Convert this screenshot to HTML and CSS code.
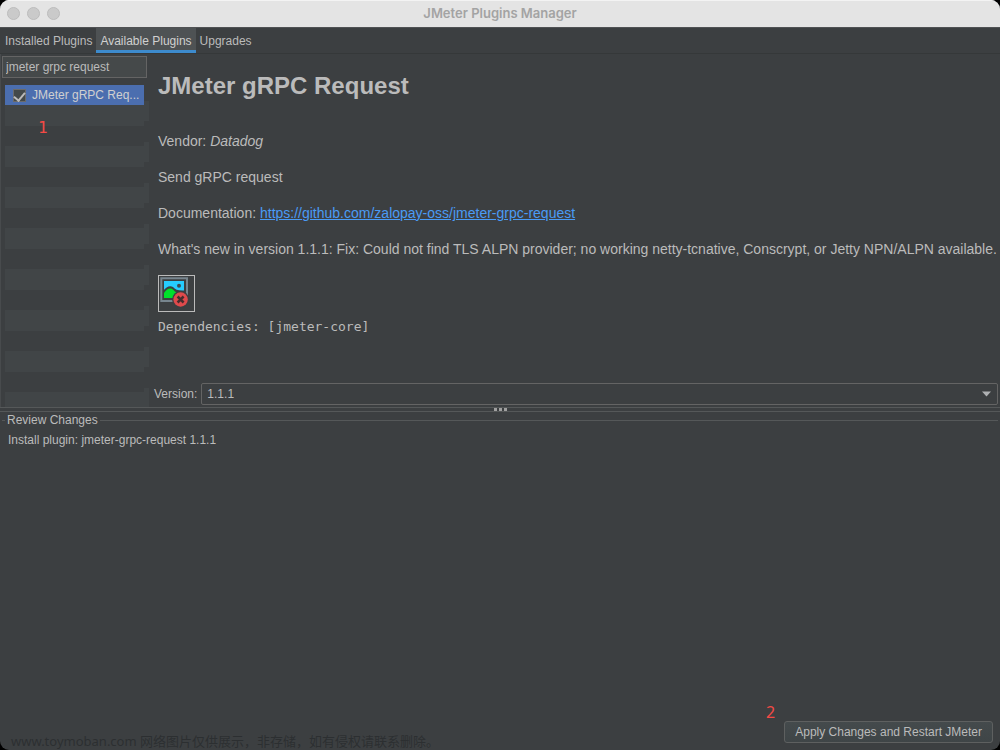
FILE: index.html
```html
<!DOCTYPE html>
<html lang="en">
<head>
<meta charset="utf-8">
<title>JMeter Plugins Manager</title>
<link rel="stylesheet" href="styles.css">
</head>
<body>
<div class="window">
  <header class="titlebar">
    <div class="lights"><button class="light" aria-label="Close"></button><button class="light" aria-label="Minimize"></button><button class="light" aria-label="Zoom"></button></div>
    <span class="window-title">JMeter Plugins Manager</span>
  </header>
  <nav class="tabs" role="tablist">
    <button class="tab" role="tab">Installed Plugins</button>
    <button class="tab active" role="tab" aria-selected="true">Available Plugins</button>
    <button class="tab" role="tab">Upgrades</button>
  </nav>
  <main class="content">
    <aside class="sidebar">
      <input class="search" type="text" value="jmeter grpc request" aria-label="Search plugins">
      <div class="list">
        <label class="item"><input class="check" type="checkbox" checked><span>JMeter gRPC Req...</span></label>
        <span class="step first">1</span>
      </div>
    </aside>
    <section class="detail">
      <article class="description">
        <h1>JMeter gRPC Request</h1>
        <p>Vendor: <i>Datadog</i></p>
        <p>Send gRPC request</p>
        <p>Documentation: <a href="https://github.com/zalopay-oss/jmeter-grpc-request">https://github.com/zalopay-oss/jmeter-grpc-request</a></p>
        <p>What's new in version 1.1.1: Fix: Could not find TLS ALPN provider; no working netty-tcnative, Conscrypt, or Jetty NPN/ALPN available.</p>
        <div class="missing">
          <svg width="31" height="31" viewBox="0 0 31 31" role="img" aria-label="Missing image">
            <path d="M1.300 1.300h25.700v22.700h-25.700z" fill="#3c3f41" stroke="#77858e" stroke-width="2"/>
            <path d="M4 4h20v17H4z" fill="#26ccff"/>
            <path d="M3 14Q8 7.500 13 10Q16 14 24 13.500V22H3z" fill="#3c3f41"/>
            <path d="M4 16Q9 9 13.500 13Q16 16 17 15L14 21H4z" fill="#00e02b"/>
            <circle cx="19" cy="8.700" r="2" fill="#3c4a50"/>
            <circle cx="20.600" cy="22.500" r="8.500" fill="#3c3f41"/>
            <circle cx="20.600" cy="22.500" r="7.200" fill="#df4a4c"/>
            <path d="M17.600 19.500l6 6M23.600 19.500l-6 6" stroke="#462c2e" stroke-width="2.500"/>
          </svg>
        </div>
        <pre>Dependencies: [jmeter-core]</pre>
      </article>
      <div class="version">
        <label for="version">Version:</label>
        <div class="select-wrap">
          <select id="version"><option>1.1.1</option></select>
          <svg class="arrow" width="9" height="6" viewBox="0 0 9 6"><path d="M0 .5h9L4.500 5.500z" fill="#afb1b3"/></svg>
        </div>
      </div>
    </section>
  </main>
  <div class="splitter"><i></i><i></i><i></i></div>
  <fieldset class="review">
    <legend>Review Changes</legend>
    <p>Install plugin: jmeter-grpc-request 1.1.1</p>
  </fieldset>
  <footer class="actions">
    <span class="step second">2</span>
    <button class="apply">Apply Changes and Restart JMeter</button>
  </footer>
  <div class="watermark">www.toymoban.com 网络图片仅供展示，非存储，如有侵权请联系删除。</div>
</div>
</body>
</html>
```
FILE: styles.css
```css
* { box-sizing: border-box; }
body {
  margin: 0;
  background: #000;
  color: #bbb;
  font: 12px/16px "Liberation Sans", "Noto Sans CJK SC", sans-serif;
}
button, input, select { font: inherit; color: inherit; margin: 0; }
.window {
  position: relative;
  display: flex;
  flex-direction: column;
  min-height: 100vh;
  overflow: hidden;
  border-radius: 9px;
  background: #3c3f41;
}
.titlebar {
  display: grid;
  grid-template-columns: 1fr auto 1fr;
  align-items: center;
  height: 27px;
  padding: 0 7px 2px;
  background: #e4e4e4;
  border-top: 1px solid #f3f3f3;
}
.lights { display: flex; gap: 7px; }
.light {
  width: 13px;
  height: 13px;
  padding: 0;
  border: 1px solid #bcbcbc;
  border-radius: 50%;
  background: #cacaca;
}
.window-title { color: #a3a3a3; font: 600 13px/16px Inter, sans-serif; }
.tabs {
  display: flex;
  height: 27px;
  border-top: 1px solid #505254;
  border-bottom: 1px solid #353839;
}
.tab {
  padding: 0 4px;
  border: 0;
  background: none;
}
.tab:first-child { padding-left: 5px; }
.tab.active { background: #4e5254; border-bottom: 3px solid #3d8bcd; padding-top: 3px; color: #d0d0d0; }
.content { display: flex; height: 353px; }
.sidebar {
  display: flex;
  flex-direction: column;
  flex: none;
  width: 149px;
  padding: 2px 0 0 2px;
  border-left: 1px solid #484b4d;
}
.search {
  width: 145px;
  height: 22px;
  margin-left: -1px;
  padding: 0 3px;
  border: 1px solid #646464;
  background: #45494a;
}
.list {
  flex: 1;
  margin-top: 7px;
  margin-left: 2px;
  background:
    repeating-linear-gradient(#3c3f41 0 20px, #414547 20px 41px) 0 0 / 139px 100% no-repeat,
    repeating-linear-gradient(#3c3f41 0 16px, #414547 16px 36px, #3c3f41 36px 41px) 139px 0 / 5px 100% no-repeat;
}
.item {
  display: flex;
  align-items: center;
  gap: 6px;
  width: 139px;
  height: 20px;
  padding-left: 8px;
  background: #4b6eaf;
  color: #d0d0d0;
  white-space: nowrap;
}
.check {
  appearance: none;
  display: flex;
  justify-content: center;
  flex: none;
  width: 13px;
  height: 13px;
  border: 1px solid #6b6b6b;
  background: #43494a;
}
.check:checked::after {
  content: "";
  width: 5px;
  height: 9px;
  border: solid #bbb;
  border-width: 0 2px 2px 0;
  transform: rotate(40deg);
}
.step {
  color: #f54a45;
  font: 16px/16px "Noto Sans", sans-serif;
}
.step.first {
  display: block;
  margin: 15px 0 0 33px;
  font-family: "DejaVu Sans Mono", monospace;
}
.detail {
  display: flex;
  flex-direction: column;
  flex: 1;
  min-width: 0;
  padding: 0 2px 2px 5px;
}
.description {
  flex: 1;
  padding-left: 4px;
  font-size: 14px;
  line-height: 18px;
  white-space: nowrap;
}
h1 { margin: 18px 0 32px; font-size: 24px; line-height: 28px; }
.description p { margin: 0 0 18px; }
a { color: #4a9bf5; }
.missing {
  width: 37px;
  height: 37px;
  padding: 1px;
  border: 1px solid #bbb;
  margin-top: -1px;
}
pre { margin: 6px 0 0; font: 13px/18px "DejaVu Sans Mono", monospace; }
.version { display: flex; align-items: center; gap: 4px; }
.select-wrap { position: relative; flex: 1; }
select {
  appearance: none;
  display: block;
  width: 100%;
  height: 22px;
  padding: 0 5px;
  border: 1px solid #646464;
  border-radius: 2px;
  background: #3c3f41;
}
.arrow { position: absolute; right: 7px; top: 8px; pointer-events: none; }
.splitter {
  display: flex;
  justify-content: center;
  align-items: center;
  gap: 2px;
  height: 5px;
  border-top: 1px solid #555859;
  border-bottom: 1px solid #555859;
}
.splitter i { width: 3px; height: 3px; background: #a0a0a0; }
.review {
  flex: 1;
  min-width: 0;
  margin: 0 2px;
  padding: 4px 6px;
  border: 0 solid #555859;
  border-top-width: 1px;
}
legend { margin-left: -3px; padding: 0 2px; }
.review p { margin: 0; }
.actions {
  display: flex;
  justify-content: flex-end;
  align-items: flex-end;
  gap: 9px;
  padding: 0 7px 7px;
}
.step.second { margin-bottom: 23px; }
.apply {
  height: 22px;
  padding: 0 10px;
  border: 1px solid #5e6060;
  border-radius: 3px;
  background: linear-gradient(#444a4c, #3f4547);
}
.watermark {
  position: absolute;
  left: 11px;
  bottom: 0;
  color: #2c2f31;
  font: 13px/17px "Noto Sans", "Noto Sans CJK SC", sans-serif;
}
```
